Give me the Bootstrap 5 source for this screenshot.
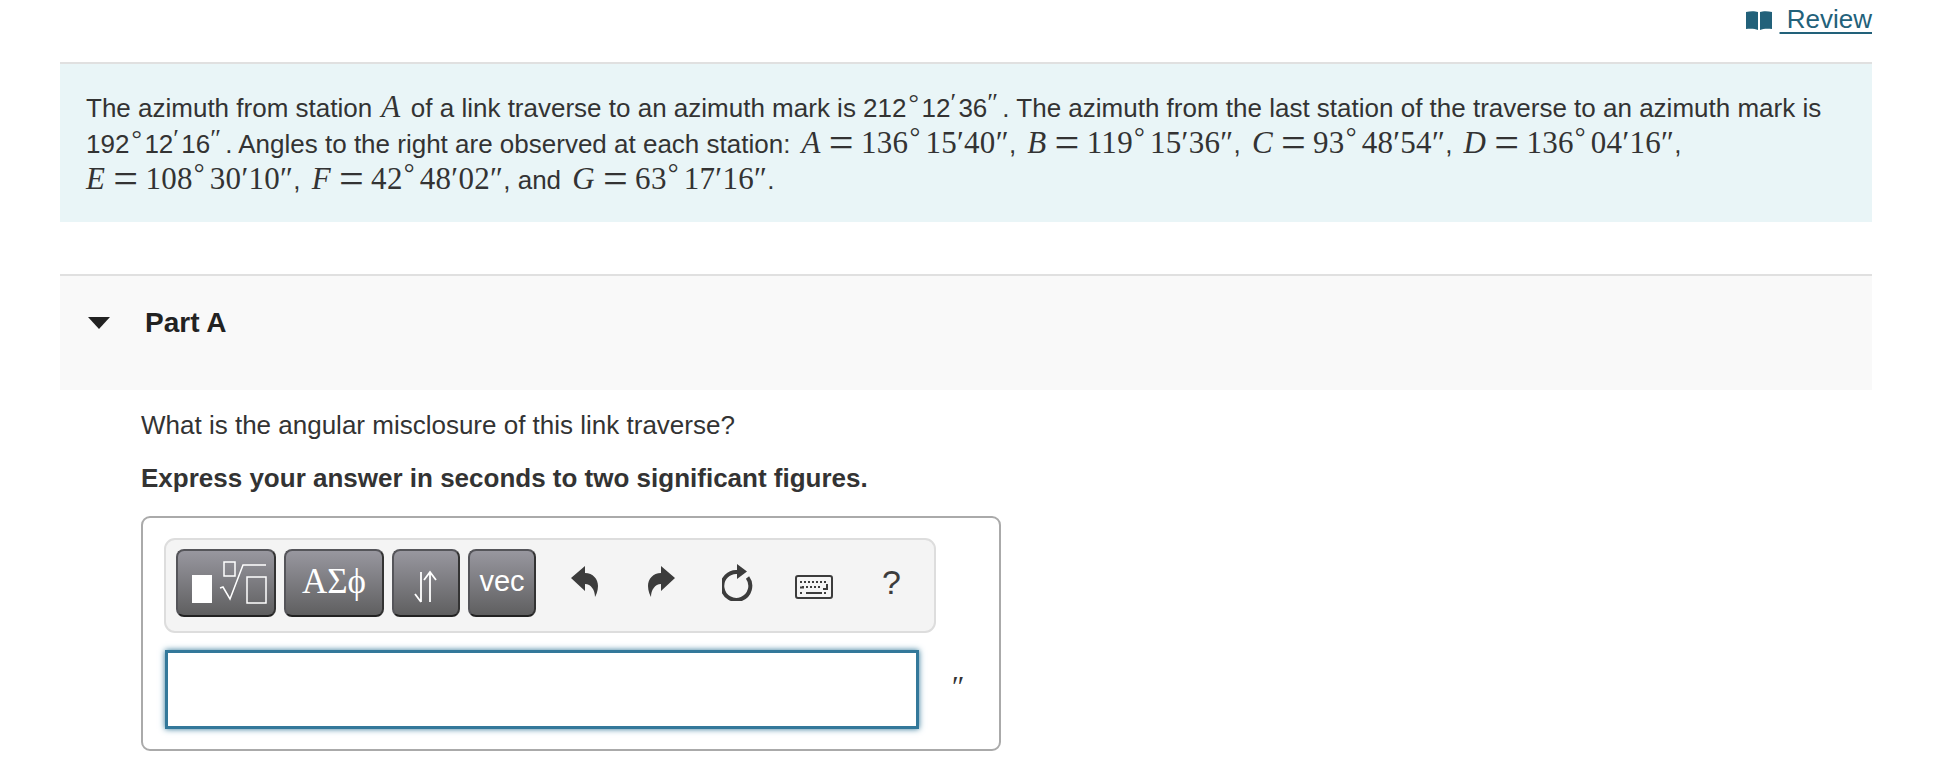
<!DOCTYPE html>
<html lang="en">
<head>
    <meta charset="UTF-8">
    <meta name="viewport" content="width=device-width, initial-scale=1.0">
    <title>Part A</title>
    <link href="https://cdn.jsdelivr.net/npm/bootstrap@5.3.0/dist/css/bootstrap.min.css" rel="stylesheet">
    <style>
        body { font-family: "Liberation Sans", Arial, sans-serif; font-size: 26px; line-height: 36px; color: #333; background: #fff; }
        .page-wrap { padding: 0 74px 0 60px; }
        /* Review link */
        .review-bar { height: 62px; padding-top: 1px; }
        .review-link { color: #22617a; text-decoration: underline; text-decoration-thickness: 2px; text-underline-offset: 4px; font-size: 26px; }
        .review-link svg { margin-right: 8px; vertical-align: -3px; }
        /* Question statement */
        .intro-band { background: #e9f5f7; border-top: 2px solid #e0e0e0; padding: 26px 26px 25px; height: 160px; }
        .mth { font-family: "Liberation Serif", "Times New Roman", serif; font-size: 31px; line-height: 0; letter-spacing: .3px; white-space: nowrap; margin-left: 4px; }
        .mth-solo { margin: 0 2px; }
        .mth i { margin-right: 1px; }
        .mth-eq { font-size: 44px; line-height: 0; vertical-align: -4px; margin: 0 7px; font-weight: 400; }
        .deg-up { display: inline-block; width: 17px; padding-left: 1px; font-size: 27px; position: relative; top: -7px; line-height: 0; }
        .tick { display: inline-block; font-family: "Liberation Serif", serif; font-size: 26px; line-height: 0; vertical-align: 6px; }
        .tick-deg { width: 15px; padding-left: 2px; }
        .tick-one { width: 8px; }
        .tick-two { width: 15px; }
        /* Part header */
        .part-band { background: #f9f9f9; border-top: 2px solid #e0e0e0; margin-top: 52px; height: 116px; padding: 29px 0 0 28px; }
        .part-caret { width: 0; height: 0; border-left: 11px solid transparent; border-right: 11px solid transparent; border-top: 12px solid #222; margin-top: 12px; }
        .part-title { font-size: 28px; font-weight: 700; color: #222; margin-left: 35px; }
        .part-body { padding: 17px 0 0 81px; }
        .part-body p { margin: 0 0 17px; }
        /* Answer box */
        .answer-box { width: 860px; height: 235px; border: 2px solid #aaa; border-radius: 9px; padding: 20px 0 0 21px; margin-top: 20px; }
        .tool-panel { width: 772px; height: 95px; background: #f4f4f4; border: 2px solid #ddd; border-radius: 11px; padding: 9px 0 0 10px; }
        .tool-btn { height: 68px; border: 2px solid #55555a; border-bottom-color: #222; border-right-color: #333; border-radius: 8px; background: linear-gradient(#98979f, #5f5f60); color: #fff; padding: 0; }
        .w-root, .w-greek { width: 100px; }
        .w-arrows, .w-vec { width: 68px; }
        .w-greek { font-family: "Liberation Serif", serif; font-size: 35px; padding-bottom: 2px; }
        .w-vec { font-size: 29px; padding-bottom: 5px; }
        .q-mark { font-size: 34px; color: #3c3c3c; margin: 15px 0 0 49px; }
        .undo-ico { margin: 17px 0 0 35px; }
        .redo-ico { margin: 17px 0 0 50px; }
        .refresh-ico { margin: 15px 0 0 47px; }
        .kbd-ico { margin: 26px 0 0 40px; }
        .input-row { margin-top: 17px; margin-left: 1px; }
        .answer-input { width: 754px; height: 79px; border: 3px solid #33789a; box-shadow: 0 0 6px #33789a; outline: 0; background: #fff; }
        .unit-mark { font-family: "Liberation Serif", serif; font-style: italic; font-size: 30px; margin-left: 31px; line-height: 1; margin-top: 21px; letter-spacing: 1px; }
    </style>
</head>
<body>
    <div class="page-wrap">
        <!-- Review -->
        <div class="review-bar d-flex justify-content-end">
            <a class="review-link" href="#">
                <svg width="26" height="20" viewBox="0 0 26 20"><path fill="#22617a" d="M0 1c4-1 9-1 12 0v18c-3-1.500-8-1.500-12-1zM26 1c-4-1-9-1-12 0v18c3-1.500 8-1.500 12-1z"/></svg><span> Review</span>
            </a>
        </div>

        <!-- Enunciado -->
        <div class="intro-band">
            The azimuth from station <span class="mth mth-solo"><i>A</i></span> of a link traverse to an azimuth mark is 212<span class="tick tick-deg">&#176;</span>12<span class="tick tick-one">&#8242;</span>36<span class="tick tick-two">&#8243;</span>. The azimuth from the last station of the traverse to an azimuth mark is<br>
            192<span class="tick tick-deg">&#176;</span>12<span class="tick tick-one">&#8242;</span>16<span class="tick tick-two">&#8243;</span>. Angles to the right are observed at each station:
            <span class="mth"><i>A</i><span class="mth-eq">=</span>136<span class="deg-up">&#176;</span>15&#8242;40&#8243;</span>,
            <span class="mth"><i>B</i><span class="mth-eq">=</span>119<span class="deg-up">&#176;</span>15&#8242;36&#8243;</span>,
            <span class="mth"><i>C</i><span class="mth-eq">=</span>93<span class="deg-up">&#176;</span>48&#8242;54&#8243;</span>,
            <span class="mth"><i>D</i><span class="mth-eq">=</span>136<span class="deg-up">&#176;</span>04&#8242;16&#8243;</span>,<br>
            <span class="mth ms-0"><i>E</i><span class="mth-eq">=</span>108<span class="deg-up">&#176;</span>30&#8242;10&#8243;</span>,
            <span class="mth"><i>F</i><span class="mth-eq">=</span>42<span class="deg-up">&#176;</span>48&#8242;02&#8243;</span>, and
            <span class="mth"><i>G</i><span class="mth-eq">=</span>63<span class="deg-up">&#176;</span>17&#8242;16&#8243;</span>.
        </div>

        <!-- Part A -->
        <div class="part-band d-flex align-items-start">
            <div class="part-caret"></div>
            <div class="part-title">Part A</div>
        </div>

        <div class="part-body">
            <p>What is the angular misclosure of this link traverse?</p>
            <p class="fw-bold">Express your answer in seconds to two significant figures.</p>

            <div class="answer-box">
                <div class="tool-panel d-flex align-items-start">
                    <button class="tool-btn w-root" type="button" aria-label="Templates">
                        <svg class="d-block" width="96" height="64" viewBox="0 0 96 64" fill="none" stroke="#fff" stroke-width="1.500">
                            <rect x="14" y="24" width="20" height="28" fill="#fff" stroke="none"/>
                            <rect x="46" y="11" width="11" height="14"/>
                            <path d="M42 37l3-1 7 12 13-34h23"/>
                            <rect x="69" y="26" width="19" height="26"/>
                        </svg>
                    </button>
                    <button class="tool-btn w-greek ms-2" type="button">&#913;&#931;&#981;</button>
                    <button class="tool-btn w-arrows ms-2" type="button" aria-label="Arrows">
                        <svg class="d-block mx-auto" width="34" height="64" viewBox="0 0 34 64" fill="none" stroke="#fff" stroke-width="1.800">
                            <path d="M12 21v30M6 43l6 8"/>
                            <path d="M21 51V21M15 29l6-8 6 8"/>
                        </svg>
                    </button>
                    <button class="tool-btn w-vec ms-2" type="button">vec</button>

                    <div class="d-flex align-items-start">
                        <svg class="undo-ico" width="27" height="31" viewBox="0 0 27 31"><path fill="#3c3c3c" d="M0 12L14 0v7c8 0 13 6 13 13 0 5-2 9-3 11 0-7-4-13-10-13v7z"/></svg>
                        <svg class="redo-ico" width="27" height="31" viewBox="0 0 27 31"><path fill="#3c3c3c" d="M27 12L13 0v7C5 7 0 13 0 20c0 5 2 9 3 11 0-7 4-13 10-13v7z"/></svg>
                        <svg class="refresh-ico" width="33" height="37" viewBox="0 0 33 37"><path fill="none" stroke="#3c3c3c" stroke-width="4" d="M25.500 13.500A14 14 0 1 1 16 8"/><path fill="#3c3c3c" d="M15 0l10 7.500-10 7.500z"/></svg>
                        <svg class="kbd-ico" width="38" height="24" viewBox="0 0 38 24">
                            <rect x="1" y="1" width="36" height="22" rx="2" fill="#f4f4f4" stroke="#3c3c3c" stroke-width="2"/>
                            <path stroke="#3c3c3c" stroke-width="2" stroke-dasharray="2 2" d="M5 7h28M7 12h20M5 18h4M29 18h4"/>
                            <path stroke="#3c3c3c" stroke-width="2" fill="none" d="M11 18h16M5 12.500h4M32 9v5h-4"/>
                        </svg>
                        <span class="q-mark">?</span>
                    </div>
                </div>

                <div class="d-flex align-items-start input-row">
                    <input class="answer-input" type="text" aria-label="Answer">
                    <span class="unit-mark">&#8243;</span>
                </div>
            </div>
        </div>
    </div>

    <script src="https://cdn.jsdelivr.net/npm/bootstrap@5.3.0/dist/js/bootstrap.bundle.min.js"></script>
</body>
</html>
